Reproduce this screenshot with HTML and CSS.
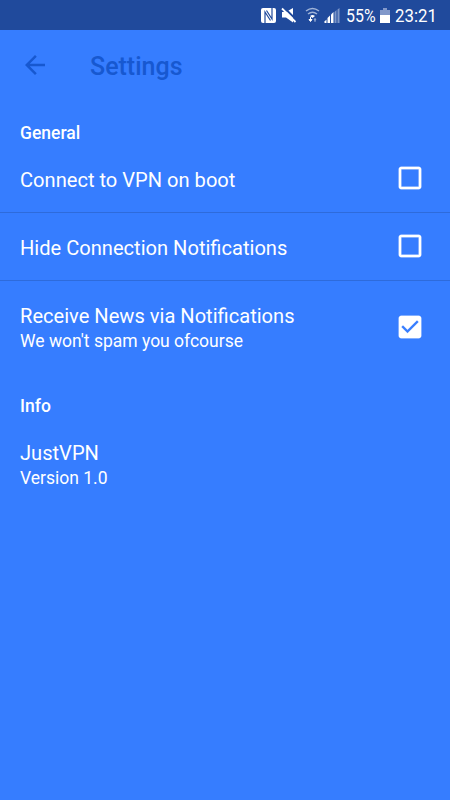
FILE: index.html
```html
<!DOCTYPE html>
<html lang="en">
<head>
    <meta charset="UTF-8">
    <meta name="viewport" content="width=device-width, initial-scale=1.0">
    <title>Settings</title>
    <link rel="stylesheet" href="styles.css">
</head>
<body>
    <div class="status-bar">
        <svg class="status-icons" width="86" height="30" viewBox="0 0 86 30">
            <!-- nfc -->
            <rect x="1" y="8" width="15" height="15" rx="2" fill="#fff"/>
            <path d="M5 23V12l5.500 8.500M6.500 10.500L12 19V8" fill="none" stroke="#204a9c" stroke-width="1.200"/>
            <!-- mute -->
            <path d="M22 12h4l7-4v14.500l-7-5h-4z" fill="#fff"/>
            <path d="M23.500 7L37 20.500" stroke="#204a9c" stroke-width="2"/>
            <path d="M22 8.500L35.500 22" stroke="#fff" stroke-width="1.800"/>
            <!-- wifi -->
            <g fill="none" stroke="#a0b4d8" stroke-width="1.500">
                <path d="M46 11q6.500-5 13 0"/>
                <path d="M48 14q4.500-3.500 9 0"/>
            </g>
            <path d="M50 16q2.500-2 5 0l-2.500 2z" fill="#fff"/>
            <path d="M50.500 17v4M49 19.500l1.500 2 1.500-2z" fill="#fff" stroke="#fff"/>
            <path d="M55 22v-3.500M54 20l1-1.500 1 1.500z" fill="#8fa5ce" stroke="#8fa5ce"/>
            <!-- signal -->
            <g fill="#fff">
                <path d="M64.500 23v-1.500l2-2V23z"/>
                <path d="M67.500 23v-5l2.500-2.500V23z"/>
                <path d="M71 23v-8.500l2.500-2.500V23z"/>
            </g>
            <path d="M74.500 23V12l2-2V23zM77.500 23V9.500L79.500 8v15z" fill="#7c96c8"/>
        </svg>
        <span class="percent">55%</span>
        <svg class="battery" width="10" height="30" viewBox="0 0 10 30">
            <path d="M0 10h3V8h4v2h3v5H0z" fill="#8198ca"/>
            <path d="M0 15h10v8H0z" fill="#fff"/>
        </svg>
        <span class="clock">23:21</span>
    </div>
    <header class="toolbar">
        <svg class="back" width="30" height="30" viewBox="0 0 24 24">
            <path d="M20 11H7.830l5.590-5.590L12 4l-8 8 8 8 1.410-1.410L7.830 13H20v-2z"/>
        </svg>
        <h1>Settings</h1>
    </header>
    <main>
        <h2>General</h2>
        <div class="row">
            <div class="title">Connect to VPN on boot</div>
            <svg class="check" width="30" height="30" viewBox="0 0 24 24">
                <path d="M19 5v14H5V5h14m0-2H5c-1.100 0-2 .9-2 2v14c0 1.100.9 2 2 2h14c1.100 0 2-.9 2-2V5c0-1.100-.9-2-2-2z"/>
            </svg>
        </div>
        <div class="row">
            <div class="title">Hide Connection Notifications</div>
            <svg class="check" width="30" height="30" viewBox="0 0 24 24">
                <path d="M19 5v14H5V5h14m0-2H5c-1.100 0-2 .9-2 2v14c0 1.100.9 2 2 2h14c1.100 0 2-.9 2-2V5c0-1.100-.9-2-2-2z"/>
            </svg>
        </div>
        <div class="row tall">
            <div>
                <div class="title">Receive News via Notifications</div>
                <div class="summary">We won't spam you ofcourse</div>
            </div>
            <svg class="check" width="30" height="30" viewBox="0 0 24 24">
                <path d="M19 3H5c-1.110 0-2 .9-2 2v14c0 1.100.89 2 2 2h14c1.110 0 2-.9 2-2V5c0-1.100-.89-2-2-2zm-9 14l-5-5 1.410-1.410L10 14.170l7.590-7.590L19 8l-9 9z"/>
            </svg>
        </div>
        <h2>Info</h2>
        <div class="row tall">
            <div>
                <div class="title">JustVPN</div>
                <div class="summary">Version 1.0</div>
            </div>
        </div>
    </main>
</body>
</html>
```

FILE: styles.css
```css
body {
    margin: 0;
    height: 800px;
    overflow: hidden;
    background: #367dff;
    color: #fff;
    font-family: Roboto, sans-serif;
}
.status-bar {
    display: flex;
    height: 30px;
    padding-left: 260px;
    background: #204a9c;
    font-size: 18.5px;
    line-height: 32px;
    white-space: nowrap;
}
.status-icons, .battery, .back, .check {
    display: block;
    flex: none;
}
.status-bar span {
    flex: none;
    transform-origin: left;
}
.percent {
    width: 34px;
    transform: scaleX(0.86);
}
.clock {
    margin-left: 5px;
    transform: scaleX(0.91);
}
.toolbar {
    display: flex;
    align-items: center;
    height: 70px;
    padding-left: 20px;
}
.back {
    fill: #1758d0;
}
h1 {
    margin: 4px 0 0 40px;
    color: #1758d0;
    font-size: 25px;
    font-weight: 500;
    line-height: 30px;
}
h2 {
    margin: 0;
    padding: 23px 20px 1px;
    font-size: 17.5px;
    font-weight: 500;
    line-height: 21px;
}
.row {
    display: flex;
    align-items: center;
    justify-content: space-between;
    box-sizing: border-box;
    height: 68px;
    padding: 0 25px 0 20px;
    border-bottom: 1px solid #2e6bdb;
}
.tall {
    height: 92px;
    border: 0;
}
.title {
    padding-top: 2px;
    font-size: 20.1px;
    line-height: 26px;
}
.summary {
    font-size: 17.5px;
    line-height: 25px;
}
.check {
    margin-bottom: 1px;
    fill: #fff;
    stroke: #fff;
    stroke-width: 0.2px;
}
```
